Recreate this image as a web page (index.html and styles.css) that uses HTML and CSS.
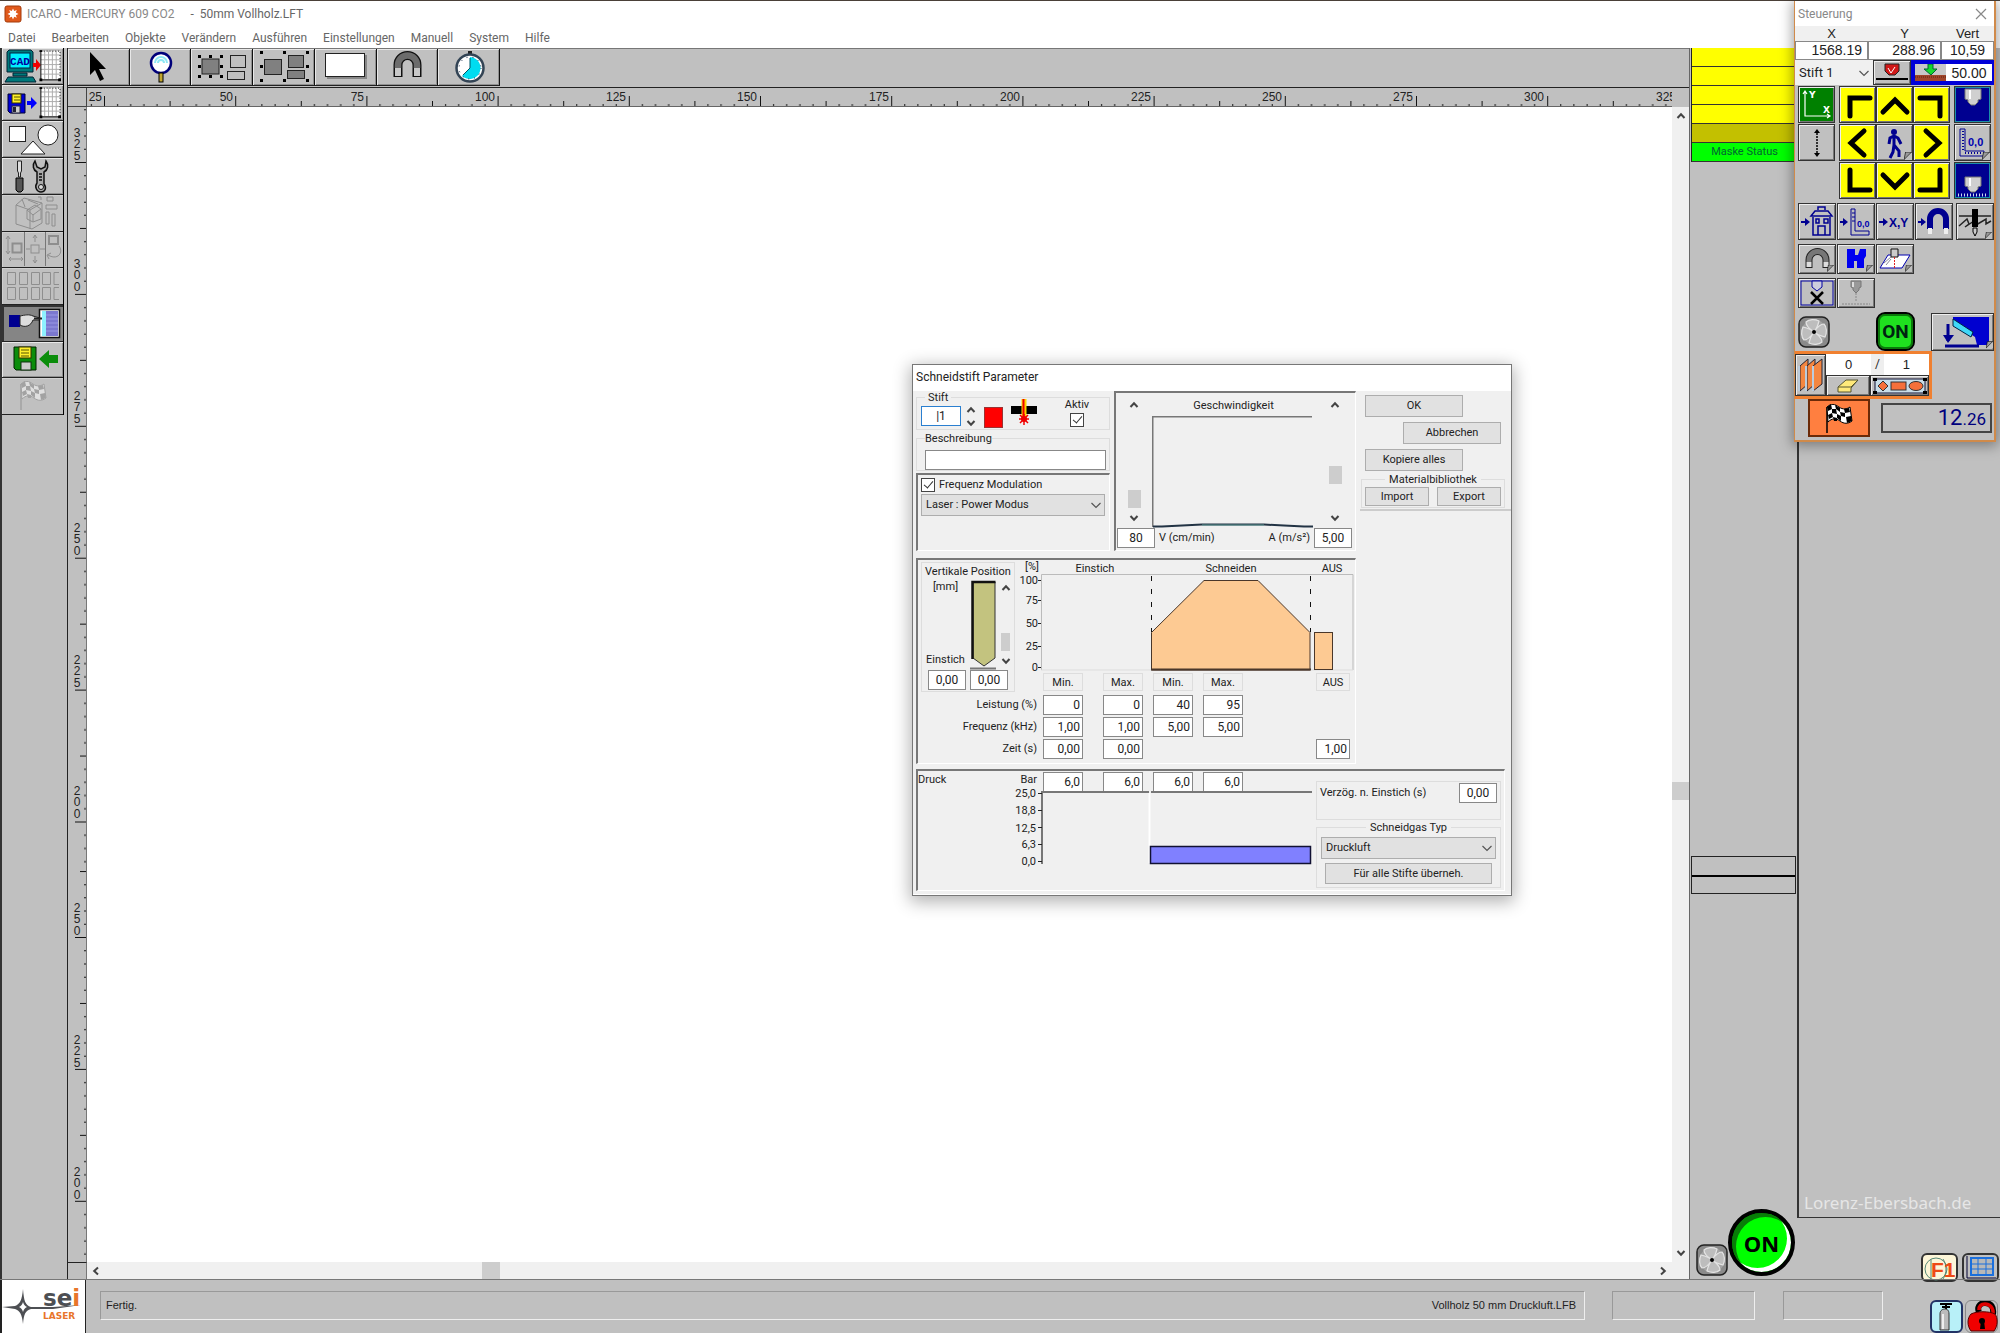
FILE: index.html
```
<!DOCTYPE html>
<html lang="de">
	<head>
		<meta charset="UTF-8">
		<meta name="viewport" content="width=device-width, initial-scale=1.0">
		<title>ICARO - MERCURY 609 CO2</title>
		<link rel="stylesheet" href="styles.css">
	</head>

	<body>
		<!-- Shared symbols -->
		<svg class="defs" width="0" height="0" aria-hidden="true">
			<symbol id="up" viewBox="0 0 10 10"><path d="M1.500 7 5 3.200 8.500 7" fill="none" stroke="#444" stroke-width="2"/></symbol>
			<symbol id="down" viewBox="0 0 10 10"><path d="M1.500 3 5 6.800 8.500 3" fill="none" stroke="#444" stroke-width="2"/></symbol>
			<symbol id="left" viewBox="0 0 10 10"><path d="M7 1.500 3.200 5 7 8.500" fill="none" stroke="#444" stroke-width="2"/></symbol>
			<symbol id="right" viewBox="0 0 10 10"><path d="M3 1.500 6.800 5 3 8.500" fill="none" stroke="#444" stroke-width="2"/></symbol>
			<symbol id="drop" viewBox="0 0 10 10"><path d="M0.500 3 5 7.500 9.500 3" fill="none" stroke="#555" stroke-width="1.200"/></symbol>
			<symbol id="fold" viewBox="0 0 10 10"><path d="M0 10 10 0V10Z" fill="#c0c0c0"/><path d="M0 9.500 9.500 0H2L0 9.500Z" fill="#999" stroke="#000" stroke-width=".8"/></symbol>
			<symbol id="fan" viewBox="0 0 32 32">
				<rect x="1" y="1" width="30" height="30" rx="7" fill="#8a8a8a" stroke="#222" stroke-width="1.500"/>
				<circle cx="16" cy="16" r="12.500" fill="#a4a4a4"/>
				<g fill="#bdbdbd" stroke="#e4e4e4" stroke-width="1.200">
					<path d="M16 16C13 14 8 10 8 6c3-3 9-3 13-1-1 4-2 8-5 11Z"/>
					<path d="M16 16c2-3 6-8 10-8 3 3 3 9 1 13-4-1-8-2-11-5Z"/>
					<path d="M16 16c3 2 8 6 8 10-3 3-9 3-13 1 1-4 2-8 5-11Z"/>
					<path d="M16 16c-2 3-6 8-10 8-3-3-3-9-1-13 4 1 8 2 11 5Z"/>
				</g>
				<circle cx="16" cy="16" r="2" fill="#000"/>
			</symbol>
			<symbol id="sheet" viewBox="0 0 24 33">
				<rect x="3" y="1" width="20" height="29" fill="#fff"/>
				<path d="M7 1v29M11 1v29M15 1v29M19 1v29M3 5h20M3 10h20M3 15h20M3 20h20M3 25h20" stroke="#aaa"/>
				<path d="M3 0v31h20" fill="none" stroke="#000"/>
				<path d="M3 1h20v29" fill="none" stroke="#000" stroke-dasharray="1 2"/>
				<path d="M1.500 29.500h3v3h-3zM21 29.500h3v3h-3zM1.500 0h3v2h-3z"/>
			</symbol>
			<symbol id="flag" viewBox="0 0 28 30">
				<path d="M2 3v26" stroke="currentColor" stroke-width="1.500"/>
				<path d="M2 3c4-4 8-3 12 0s8 2 11 0l2 14c-4 3-8 3-12 0s-8-3-12 1Z" fill="#fff" stroke="currentColor"/>
				<path d="M2 3 6 0l1 5-4 2zM10 1l5 3v4l-4-3zM19 5l5-1 1 4-5 1zM7 5l4 0 1 5-5-1zM15 8l5 1v4l-4-1zM3 11l4-2 1 4-4 2zM12 10l4 2 0 5-4-3zM21 13l5-1 1 5-5 2zM8 13l4 1 0 3-3 0z" fill="currentColor"/>
			</symbol>
		</svg>

		<!-- Title and menu -->
		<header class="titlebar">
			<svg width="18" height="18" viewBox="0 0 18 18"><rect x="1" y="1" width="16" height="16" rx="2" fill="#e0591b" stroke="#a43a0a"/><path d="M9 3.500l1.200 2.500 2.600-1-1 2.600L14.500 9l-2.700 1.200 1 2.600-2.600-1L9 14.500l-1.200-2.700-2.600 1 1-2.600L3.500 9l2.700-1.400-1-2.600 2.600 1Z" fill="#fff"/></svg>
			<span class="app-name">ICARO - MERCURY 609 CO2</span>
			<span class="file-name">-&nbsp; 50mm Vollholz.LFT</span>
		</header>
		<nav class="menubar">
			<button>Datei</button>
			<button>Bearbeiten</button>
			<button>Objekte</button>
			<button>Verändern</button>
			<button>Ausführen</button>
			<button>Einstellungen</button>
			<button>Manuell</button>
			<button>System</button>
			<button>Hilfe</button>
		</nav>

		<main>
			<!-- Left tool strip -->
			<aside class="left-tools">
				<div class="tool-stack">
					<button class="tool" aria-label="CAD Import"><svg width="58" height="34" viewBox="0 0 58 34">
						<path d="M5 1h22l2 2v20H3V3Z" fill="#00797b" stroke="#023"/><rect x="6" y="4" width="20" height="15" fill="#00f0ff" stroke="#024"/>
						<text x="16" y="15.500" text-anchor="middle" class="cad">CAD</text>
						<path d="M9 24h14v3H9zM4 28h25l3 5H1z" fill="#00797b" stroke="#023"/>
						<path d="M29 14h3v-4l5 6-5 6v-4h-3z" fill="#f00000"/><use href="#sheet" x="34" y="1" width="23" height="32"/></svg></button>
					<button class="tool" aria-label="Datei laden"><svg width="58" height="34" viewBox="0 0 58 34">
						<path d="M4 8h17v19H6l-2-2Z" fill="#0000d8" stroke="#003"/><rect x="8" y="8" width="9" height="9" fill="#ffee2b" stroke="#330"/><path d="M10 11h6M10 14h6" stroke="#550"/><rect x="8" y="20" width="8" height="7" fill="#ccc" stroke="#224"/><rect x="9" y="21" width="3" height="5" fill="#223"/>
						<path d="M23 15h4v-4l6 6-6 6v-4h-4z" fill="#0000ff"/><use href="#sheet" x="34" y="1" width="23" height="32"/></svg></button>
					<button class="tool" aria-label="Formen"><svg width="58" height="34" viewBox="0 0 58 34">
						<g fill="#fff" stroke="#222"><rect x="5.500" y="4.500" width="16" height="15"/><circle cx="44" cy="13" r="10"/><path d="M17 32 29 19l12 13Z"/></g></svg></button>
					<button class="tool" aria-label="Werkzeuge"><svg width="58" height="34" viewBox="0 0 58 34">
						<path d="M13.500 2h4v10l-1 2v4h-2v-4l-1-2z" fill="#ddd" stroke="#222"/><path d="M12 19h7v12l-2 2h-3l-2-2z" fill="#555" stroke="#000"/>
						<path d="M31 2c-3 4-2 9 2 11v11c-3 4 0 9 4 9s6-4 3-8V13c4-2 5-7 2-11l-1 6-4 2-4-2z" fill="#aaa" stroke="#111" stroke-width="1.500"/><circle cx="37" cy="28" r="2.500" fill="#ddd" stroke="#111"/><path d="M36.500 14v8" stroke="#333" stroke-width="3" stroke-dasharray="2 1"/></svg></button>
					<button class="tool" aria-label="Volumen" disabled><svg width="58" height="34" viewBox="0 0 58 34">
						<g fill="none" stroke="#8e8e8e"><path d="M12 9 20 2l18 5v20l-10 6-16-5ZM12 9l14 5 12-7M26 14v19M18 3l3 8M24 4l10 4M23 14l8-5 6 4-8 6zM23 14v9l6 3v-8M37 13v10l-8 3M43 1h6v4h-6zM34 1h3v3M42 9h11v4H42zM42 16h3v12h-3zM48 18h3v12h-3z"/></g></svg></button>
					<button class="tool" aria-label="Skalieren, Verschieben, Drehen" disabled><svg width="58" height="34" viewBox="0 0 58 34">
						<g fill="none" stroke="#8e8e8e"><path d="M20.500 0v34M41.500 0v34" stroke="#777"/><path d="M4 5v16M2 7l2-3 2 3M2 19l2 3 2-3M5 27h14M7 25l-2 2 2 2M17 25l2 2-2 2"/><rect x="8.500" y="11.500" width="9" height="9" stroke-width="2"/><rect x="27" y="13" width="8" height="8"/><path d="M31 3v7M31 24v7M22 17h4M36 17h5M29 6l2-3 2 3M29 28l2 3 2-3"/><rect x="45" y="4" width="9" height="8" stroke-width="2"/><path d="M55 14c5 6-1 15-11 9M47 21l-4 2 2 4"/></g></svg></button>
					<button class="tool" aria-label="Verschachteln" disabled><svg width="58" height="34" viewBox="0 0 58 34">
						<g fill="none" stroke="#8e8e8e"><path d="M3.500 3.500h8v12h-8zM15.500 3.500h8v12h-8zM27.500 3.500h8v12h-8zM38.500 3.500h8v12h-8zM3.500 18.500h8v12h-8zM15.500 18.500h8v12h-8zM27.500 18.500h8v12h-8zM38.500 18.500h8v12h-8zM55 3.500h-5v12h5M55 18.500h-5v12h5"/></g></svg></button>
					<button class="tool pressed" aria-label="Maschine"><svg width="58" height="34" viewBox="0 0 58 34">
						<rect x="5" y="9" width="11" height="12" fill="#000090"/><path d="M16 10c5-1 9-2 13 0l7 2v2h-7c-2 6-8 8-13 5Z" fill="#ddd" stroke="#222"/><rect x="35.500" y="3.500" width="20" height="28" fill="#fff" stroke="#111" stroke-width="1.500"/><rect x="38" y="5" width="4" height="25" fill="#8ef1ff"/><rect x="42" y="5" width="12" height="25" fill="#7b78cf"/><path d="M42 9h12M42 13h12M42 17h12M42 21h12M42 25h12" stroke="#9a98e4"/><path d="M30 12.500h8" stroke="#222" stroke-width="2"/></svg></button>
					<button class="tool" aria-label="Datei speichern"><svg width="58" height="34" viewBox="0 0 58 34">
						<path d="M10 5h22v23H12l-2-2Z" fill="#0b8d0b" stroke="#020"/><rect x="15" y="5" width="12" height="11" fill="#ffee2b" stroke="#330"/><path d="M17 8h8M17 11h8M17 14h8" stroke="#550"/><rect x="17" y="20" width="10" height="8" fill="#ccc" stroke="#131"/>
						<path d="M54 13v8h-9v5l-10-9 10-9v5z" fill="#0b8d0b"/></svg></button>
					<button class="tool faded" aria-label="Start" disabled><svg width="28" height="30"><use href="#flag" width="28" height="30"/></svg></button>
				</div>
			</aside>

			<section class="workspace">
				<!-- Top toolbar -->
				<div class="toolbar">
					<div class="tool-row">
						<button class="tool" aria-label="Auswahl"><svg width="58" height="34" viewBox="0 0 58 34"><path d="M21 2v23l5-5 5 11 4-2-5-10h7Z"/></svg></button>
						<button class="tool" aria-label="Zoom"><svg width="58" height="34" viewBox="0 0 58 34"><circle cx="30" cy="13" r="10" fill="#fff" stroke="#00007a" stroke-width="2.500"/><path d="M24 13a6 6 0 0 1 12 0M27 13a3 3 0 0 1 6 0" fill="none" stroke="#8fe8f4" stroke-width="2"/><rect x="28" y="23" width="4" height="9" fill="#c2a62c" stroke="#000"/></svg></button>
						<button class="tool" aria-label="Gruppieren"><svg width="58" height="34" viewBox="0 0 58 34"><rect x="9" y="9" width="17" height="15" fill="#808080" stroke="#222"/><path d="M5 5h3v3H5zM16 5h3v3h-3zM27 5h3v3h-3zM5 15h3v3H5zM27 15h3v3h-3zM5 25h3v3H5zM16 25h3v3h-3zM27 25h3v3h-3z"/><g fill="none" stroke="#222"><rect x="37.500" y="5.500" width="15" height="12"/><rect x="34.500" y="21.500" width="17" height="8"/></g></svg></button>
						<button class="tool" aria-label="Gruppe auflösen"><svg width="58" height="34" viewBox="0 0 58 34"><g fill="#808080" stroke="#222"><rect x="9.500" y="9.500" width="17" height="15"/><rect x="33.500" y="5.500" width="15" height="12"/><rect x="32.500" y="20.500" width="17" height="8"/></g><path d="M5 1h3v3H5zM28 1h3v3h-3zM51 1h3v3h-3zM5 15h3v3H5zM51 15h3v3h-3zM5 29h3v3H5zM28 29h3v3h-3zM51 29h3v3h-3z"/></svg></button>
						<button class="tool" aria-label="Rechteck"><svg width="58" height="34" viewBox="0 0 58 34"><path d="M11 5h40v24H11z" fill="#888"/><rect x="9.500" y="3.500" width="39" height="23" fill="#fff" stroke="#222"/></svg></button>
						<button class="tool" aria-label="Magnet"><svg width="58" height="34" viewBox="0 0 58 34"><path d="M20 27V15a9.500 9.500 0 0 1 19 0v12" fill="none" stroke="#111" stroke-width="9"/><path d="M20 18v-3a9.500 9.500 0 0 1 19 0v3" fill="none" stroke="#6c6c6c" stroke-width="6.500"/><path d="M20 26v-8M39 26v-8" stroke="#c8c8c8" stroke-width="6"/></svg></button>
						<button class="tool" aria-label="Zeit"><svg width="58" height="34" viewBox="0 0 58 34"><path d="M30 5V1" stroke="#222" stroke-width="4"/><circle cx="30" cy="18" r="13.500" fill="#fff" stroke="#345" stroke-width="2.500"/><path d="M30 18V7a11 11 0 1 1-8 19Z" fill="#00dcf0"/><circle cx="30" cy="18" r="11" fill="none" stroke="#124" stroke-dasharray="1 5"/><path d="M30 8v10l-7 7" fill="none" stroke="#056"/></svg></button>
					</div>
				</div>

				<!-- Drawing area with rulers -->
				<div class="work">
					<div class="corner"></div>
					<svg class="ruler-h" height="19">
						<defs><pattern id="th" x="17" width="131.200" height="19" patternUnits="userSpaceOnUse"><path d="M.5 8v11M13.600 16v3M26.700 16v3M39.900 16v3M53 16v3M66.100 13v6M79.200 16v3M92.300 16v3M105.500 16v3M118.600 16v3" stroke="#111"/></pattern></defs>
						<rect width="100%" height="19" fill="url(#th)"/>
						<g text-anchor="end">
							<text x="15" y="13">25</text><text x="146" y="13">50</text><text x="277" y="13">75</text><text x="408" y="13">100</text><text x="539" y="13">125</text><text x="670" y="13">150</text><text x="802" y="13">175</text><text x="933" y="13">200</text><text x="1064" y="13">225</text><text x="1195" y="13">250</text><text x="1326" y="13">275</text><text x="1457" y="13">300</text><text x="1589" y="13">325</text>
						</g>
					</svg>
					<div class="vbar">
						<svg class="chev"><use href="#up"/></svg>
						<div class="thumb"></div>
						<svg class="chev"><use href="#down"/></svg>
					</div>
					<svg class="ruler-v" width="19">
						<defs>
							<pattern id="tv" y="55" width="19" height="131.900" patternUnits="userSpaceOnUse"><path d="M7 .5h12M16 13.700h3M16 26.900h3M16 40.100h3M16 53.300h3M12 66.500h7M16 79.600h3M16 92.800h3M16 106h3M16 119.200h3" stroke="#111"/></pattern>
							<pattern id="tv2" y="830" width="19" height="131.900" patternUnits="userSpaceOnUse"><path d="M7 .5h12M16 13.700h3M16 26.900h3M16 40.100h3M16 53.300h3M12 66.500h7M16 79.600h3M16 92.800h3M16 106h3M16 119.200h3" stroke="#111"/></pattern>
						</defs>
						<rect width="19" height="760" fill="url(#tv)"/>
						<rect y="760" width="19" height="400" fill="url(#tv2)"/>
						<g text-anchor="middle">
							<text y="30"><tspan x="9">3</tspan><tspan x="9" dy="11">2</tspan><tspan x="9" dy="12">5</tspan></text>
							<text y="161"><tspan x="9">3</tspan><tspan x="9" dy="11">0</tspan><tspan x="9" dy="12">0</tspan></text>
							<text y="293"><tspan x="9">2</tspan><tspan x="9" dy="11">7</tspan><tspan x="9" dy="12">5</tspan></text>
							<text y="425"><tspan x="9">2</tspan><tspan x="9" dy="11">5</tspan><tspan x="9" dy="12">0</tspan></text>
							<text y="557"><tspan x="9">2</tspan><tspan x="9" dy="11">2</tspan><tspan x="9" dy="12">5</tspan></text>
							<text y="688"><tspan x="9">2</tspan><tspan x="9" dy="11">0</tspan><tspan x="9" dy="12">0</tspan></text>
							<text y="805"><tspan x="9">2</tspan><tspan x="9" dy="11">5</tspan><tspan x="9" dy="12">0</tspan></text>
							<text y="937"><tspan x="9">2</tspan><tspan x="9" dy="11">2</tspan><tspan x="9" dy="12">5</tspan></text>
							<text y="1069"><tspan x="9">2</tspan><tspan x="9" dy="11">0</tspan><tspan x="9" dy="12">0</tspan></text>
						</g>
					</svg>
					<div class="canvas"></div>
					<div class="corner-bottom"></div>
					<div class="hbar">
						<svg class="chev"><use href="#left"/></svg>
						<div class="thumb"></div>
						<svg class="chev"><use href="#right"/></svg>
					</div>
				</div>
			</section>

			<!-- Mask status column -->
			<section class="mask-col">
				<div class="mask-list">
					<div class="mask"></div>
					<div class="mask"></div>
					<div class="mask"></div>
					<div class="mask"></div>
					<div class="mask dim"></div>
					<div class="mask green">Maske Status</div>
				</div>
				<div class="slots"><div></div><div></div></div>
				<div class="mask-foot">
					<svg width="32" height="32"><use href="#fan" width="32" height="32"/></svg>
					<button class="on-round">ON</button>
				</div>
			</section>

			<section class="side">
				<div class="side-panel"><a class="credit" href="#">Lorenz-Ebersbach.de</a></div>
				<div class="side-icons">
					<button class="mini cream" aria-label="Hilfe F1"><svg width="34" height="26" viewBox="0 0 34 26"><circle cx="13" cy="14" r="11" fill="none" stroke="#587"/><path d="M8 4v20M20 4c4 6 4 14 0 20" fill="none" stroke="#587"/><text x="8" y="22" class="f1">F1</text></svg></button>
					<button class="mini" aria-label="Raster"><svg width="34" height="26" viewBox="0 0 34 26"><rect x="7" y="3" width="22" height="17" fill="#b8b8b8" stroke="#1b6fdc" stroke-width="2"/><path d="M14 3v17M22 3v17M7 9h22M7 14h22" stroke="#1b6fdc"/><path d="M3 1v22h29" fill="none" stroke="#003"/></svg></button>
				</div>
			</section>
		</main>

		<!-- Status bar -->
		<footer class="statusbar">
			<div class="logo">
				<svg width="83" height="53" viewBox="0 0 83 53">
					<path d="M21 9c1 12 2 16 8 18h22l28-2-28 4H29c-6 2-7 5-8 15-1-10-3-13-8-15L0 27l13-1c5-2 7-6 8-17Z" fill="#4d4f53"/>
					<path d="M21 22c1 3 2 4 4 5-2 1-3 2-4 5-1-3-2-4-4-5 2-1 3-2 4-5Z" fill="#fff"/>
					<text x="41" y="26" class="sei">se<tspan class="orange">i</tspan></text>
					<text x="41" y="39" class="laser">LASER</text>
				</svg>
			</div>
			<div class="field main-field"><span>Fertig.</span><span>Vollholz 50 mm Druckluft.LFB</span></div>
			<div class="field mid-field"></div>
			<div class="field small-field"></div>
			<div class="status-icons">
				<button class="mini ice" aria-label="Gas"><svg width="28" height="30" viewBox="0 0 28 30"><path d="M7 2h12M13 2v6M9 5h8" stroke="#000" stroke-width="2"/><path d="M7 28V12c0-4 3-5 5-5s4 1 4 5v16Z" fill="#bbb" stroke="#333"/><path d="M10 12v15" stroke="#eee" stroke-width="2"/></svg></button>
				<button class="mini plain" aria-label="Schloss offen"><svg width="32" height="32" viewBox="0 0 32 32"><path d="M13 11c-2-4 0-9 6-9s9 4 8 11" fill="none" stroke="#000" stroke-width="6"/><path d="M13 9c0-4 2-6 6-6s9 3 8 11" fill="none" stroke="#e00000" stroke-width="3.500"/><path d="M5 13c6-3 18-3 24 0 3 4 3 12-1 17H5C1 25 1 17 5 13Z" fill="#f00000" stroke="#500"/><circle cx="16" cy="20" r="3"/><path d="M15 20h3l1 8h-5z"/></svg></button>
			</div>
		</footer>

		<!-- Pen parameter dialog -->
		<form class="dialog">
			<h1>Schneidstift Parameter</h1>
			<div class="dialog-body">
				<div class="top-row">
					<div class="pen-col">
						<div class="group pen-group">
							<div class="pen-number">
								<label for="stift">Stift</label>
								<input id="stift" type="text" value="|1">
							</div>
							<div class="spin"><svg class="chev"><use href="#up"/></svg><svg class="chev"><use href="#down"/></svg></div>
							<div class="swatch"></div>
							<svg class="beam" width="26" height="26" viewBox="0 0 26 26"><path d="M0 7h26v8H0z"/><path d="M13 0v20" stroke="#ffd800" stroke-width="5"/><path d="M12.500 0v20" stroke="#f00000" stroke-width="2"/><path d="M8 20h10M13 15v11M9 16l8 8M17 16l-8 8" stroke="#f00000" stroke-width="1.500"/><circle cx="13" cy="20" r="3" fill="#f00000"/></svg>
							<div class="active-box">
								<label for="aktiv">Aktiv</label>
								<input id="aktiv" type="checkbox" checked>
							</div>
						</div>
						<div class="group desc-group">
							<label for="desc">Beschreibung</label>
							<input id="desc" type="text">
						</div>
						<div class="sunken freq-box">
							<div class="check-line"><input id="fm" type="checkbox" checked><label for="fm">Frequenz Modulation</label></div>
							<span class="select-wrap"><select aria-label="Modus"><option>Laser : Power Modus</option></select><svg><use href="#drop"/></svg></span>
						</div>
					</div>

					<div class="sunken speed-box">
						<div class="vscroll low"><svg class="chev"><use href="#up"/></svg><div class="thumb"></div><svg class="chev"><use href="#down"/></svg></div>
						<div class="speed-mid">
							<h2>Geschwindigkeit</h2>
							<svg width="163" height="112" viewBox="0 0 163 112"><path d="M.5 111V.5H160" fill="none" stroke="#777" stroke-width="2"/><path d="M1 110.500h9l20-1 20-1h62l20 1 20 1h9" fill="none" stroke="#234" stroke-width="2"/><path d="M50 109h62" stroke="#5c9a93"/></svg>
						</div>
						<div class="vscroll mid"><svg class="chev"><use href="#up"/></svg><div class="thumb"></div><svg class="chev"><use href="#down"/></svg></div>
						<div class="speed-foot">
							<input id="v" class="center" type="text" value="80"><label for="v">V (cm/min)</label>
							<label for="a" class="push">A (m/s²)</label><input id="a" class="center" type="text" value="5,00">
						</div>
					</div>

					<div class="actions">
						<button type="button" class="wide">OK</button>
						<button type="button" class="wide to-right">Abbrechen</button>
						<button type="button" class="wide">Kopiere alles</button>
						<div class="group library">
							<h2>Materialbibliothek</h2>
							<div><button type="button">Import</button><button type="button">Export</button></div>
						</div>
					</div>
				</div>

				<div class="sunken power-box">
					<div class="vert-group">
						<h2>Vertikale Position</h2>
						<div class="vert-mid">
							<div class="vert-labels"><span>[mm]</span><label for="ve">Einstich</label></div>
							<svg width="28" height="91" viewBox="0 0 28 91"><path d="M4 3h22v76l-11 8-11-8Z" fill="#c3c37f" stroke="#333"/><path d="M3.500 80V3h23" fill="none" stroke="#111" stroke-width="2.500"/><path d="M1 89.500h26" stroke="#777" stroke-width="2"/></svg>
							<div class="vscroll slim"><svg class="chev"><use href="#up"/></svg><div class="thumb"></div><svg class="chev"><use href="#down"/></svg></div>
						</div>
						<div class="vert-inputs"><input id="ve" class="center" type="text" value="0,00"><input class="center" type="text" value="0,00" aria-label="Vertikale Position"></div>
					</div>
					<svg class="power-chart" width="339" height="111" viewBox="0 2 339 111">
						<path d="M26.500 112V16.500H338V112" fill="none" stroke="#bbb"/>
						<path d="M26 112H338" stroke="#ddd"/>
						<g text-anchor="end"><text x="24" y="12">[%]</text><text x="23" y="26">100</text><text x="23" y="46">75</text><text x="23" y="69">50</text><text x="23" y="92">25</text><text x="23" y="113">0</text></g>
						<path d="M23 22.500h3M23 42.500h3M23 65.500h3M23 88.500h3M23 109.500h3" stroke="#222"/>
						<g text-anchor="middle"><text x="80" y="14">Einstich</text><text x="216" y="14">Schneiden</text><text x="317" y="14">AUS</text></g>
						<path d="M136.500 18v56M295.500 18v56" stroke="#111" stroke-dasharray="5 8"/>
						<path d="M136.500 112V74.500L189 22.500h54l52 52V112Z" fill="#fdca93" stroke="#4a372a"/>
						<rect x="299.500" y="74.500" width="18" height="37" fill="#fdca93" stroke="#4a372a"/>
						<path d="M136 111.500h160" stroke="#4a372a" stroke-width="2"/>
					</svg>
					<span class="cell head c1">Min.</span><span class="cell head">Max.</span><span class="cell head">Min.</span><span class="cell head">Max.</span><span class="cell head aus">AUS</span>
					<label class="row-name" for="l1">Leistung (%)</label>
					<input id="l1" class="cell" type="text" value="0"><input class="cell" type="text" value="0" aria-label="Leistung Einstich Max."><input class="cell" type="text" value="40" aria-label="Leistung Schneiden Min."><input class="cell" type="text" value="95" aria-label="Leistung Schneiden Max.">
					<label class="row-name" for="f1">Frequenz (kHz)</label>
					<input id="f1" class="cell" type="text" value="1,00"><input class="cell" type="text" value="1,00" aria-label="Frequenz Einstich Max."><input class="cell" type="text" value="5,00" aria-label="Frequenz Schneiden Min."><input class="cell" type="text" value="5,00" aria-label="Frequenz Schneiden Max.">
					<label class="row-name" for="z1">Zeit (s)</label>
					<input id="z1" class="cell" type="text" value="0,00"><input class="cell" type="text" value="0,00" aria-label="Zeit Einstich Max."><input class="cell aus" type="text" value="1,00" aria-label="Zeit AUS">
				</div>

				<div class="sunken gas-box">
					<div class="gas-left">
						<span class="gas-title">Druck</span>
						<label class="bar-name" for="b1">Bar</label>
						<input id="b1" class="cell" type="text" value="6,0"><input class="cell" type="text" value="6,0" aria-label="Druck Einstich Max."><input class="cell" type="text" value="6,0" aria-label="Druck Schneiden Min."><input class="cell" type="text" value="6,0" aria-label="Druck Schneiden Max.">
						<svg class="gas-chart" width="396" height="78" viewBox="0 0 396 78">
							<g text-anchor="end"><text x="118" y="5">25,0</text><text x="118" y="22">18,8</text><text x="118" y="40">12,5</text><text x="118" y="56">6,3</text><text x="118" y="73">0,0</text></g>
							<path d="M124 72V0H231M233 0H394" fill="none" stroke="#777" stroke-width="2"/>
							<path d="M120 1.500h4M120 18.500h4M120 35.500h4M120 52.500h4M120 69.500h4" stroke="#222"/>
							<path d="M231.500 1v70" stroke="#fff" stroke-width="2"/>
							<rect x="232.500" y="54.500" width="160" height="17" fill="#8080ff" stroke="#113" stroke-width="1.500"/>
						</svg>
					</div>
					<div class="gas-right">
						<div class="plain-group"><label for="delay">Verzög. n. Einstich (s)</label><input id="delay" class="center" type="text" value="0,00"></div>
						<div class="group gas-group">
							<h2>Schneidgas Typ</h2>
							<span class="select-wrap"><select aria-label="Schneidgas Typ"><option>Druckluft</option></select><svg><use href="#drop"/></svg></span>
							<button type="button">Für alle Stifte überneh.</button>
						</div>
					</div>
				</div>
			</div>
		</form>

		<!-- Control window -->
		<section class="control">
			<div class="control-title">
				<span>Steuerung</span>
				<button aria-label="Schließen"><svg width="12" height="12" viewBox="0 0 12 12"><path d="M1 1l10 10M11 1 1 11" stroke="#888" stroke-width="1.200"/></svg></button>
			</div>
			<div class="coords">
				<span>X</span><span>Y</span><span>Vert</span>
				<output>1568.19</output><output>288.96</output><output>10,59</output>
			</div>
			<div class="pen-line">
				<span class="select-wrap flat"><select aria-label="Stift"><option>Stift 1</option></select><svg><use href="#drop"/></svg></span>
				<button class="key" aria-label="Laser"><svg width="36" height="22" viewBox="0 0 36 22"><path d="M11 2h14v7l-4 4h-6l-4-4z" fill="#d01818" stroke="#222"/><path d="M14 6l3 5 4-6" stroke="#fff" fill="none"/><path d="M2 17h32" stroke="#000" stroke-width="2"/></svg></button>
				<div class="height-box"><svg width="31" height="17" viewBox="0 0 31 17"><rect width="31" height="17" fill="#c8c8c8"/><path d="M13 0h5v5h4l-6 6-7-6h4z" fill="#16d82e" stroke="#063"/><rect y="11" width="31" height="6" fill="#a0452a"/><path d="M0 13h31" stroke="#5b2412" stroke-dasharray="1 1"/></svg><input type="text" value="50.00" aria-label="Höhe"></div>
			</div>
			<div class="pad">
				<button class="key green" aria-label="Achsen"><svg width="34" height="34" viewBox="0 0 34 34"><path d="M5 4v24h24M3 6l2-3 2 3M27 26l3 2-3 2" fill="none" stroke="#fff" stroke-width="1.200"/><text x="9" y="10" class="axis">Y</text><text x="23" y="25" class="axis">X</text></svg></button>
				<button class="key yellow" aria-label="Oben links"><svg width="34" height="34" viewBox="0 0 34 34"><path d="M9 28V10h20" class="arm"/></svg></button>
				<button class="key yellow" aria-label="Oben"><svg width="34" height="34" viewBox="0 0 34 34"><path d="M5 24 17 12l12 12" class="arm"/></svg></button>
				<button class="key yellow" aria-label="Oben rechts"><svg width="34" height="34" viewBox="0 0 34 34"><path d="M5 10h20v18" class="arm"/></svg></button>
				<button class="key navy" aria-label="Kopf hoch"><svg width="34" height="34" viewBox="0 0 34 34"><path d="M9 1h16v10l-3 1v2l-3 3h-4l-3-3v-2l-3-1z" fill="#d0d0d0" stroke="#777"/><path d="M14 2v9" stroke="#fff" stroke-width="2"/></svg></button>

				<button class="key" aria-label="Höhe"><svg width="34" height="34" viewBox="0 0 34 34"><path d="M17 7v20" stroke="#000" stroke-width="1.500" stroke-dasharray="2 1"/><path d="M14 7l3-4 3 4zM14 27l3 4 3-4z"/></svg></button>
				<button class="key yellow" aria-label="Links"><svg width="34" height="34" viewBox="0 0 34 34"><path d="M23 5 10 17l13 12" class="arm"/></svg></button>
				<button class="key" aria-label="Schritt"><svg width="34" height="34" viewBox="0 0 34 34"><circle cx="16" cy="6" r="3" fill="#000090"/><path d="M16 9v11M11 18l1-6 4-2 4 2 3 6M16 19l-1 7-3 6M16 19l5 6v6" fill="none" stroke="#000090" stroke-width="3"/><use href="#fold" x="26" y="26" width="8" height="8"/></svg></button>
				<button class="key yellow" aria-label="Rechts"><svg width="34" height="34" viewBox="0 0 34 34"><path d="M11 5l13 12-13 12" class="arm"/></svg></button>
				<button class="key" aria-label="Nullpunkt"><svg width="34" height="34" viewBox="0 0 34 34"><path d="M4 3h5v22h19v5H4z" fill="none" stroke="#000090"/><path d="M7 5v20M9 27h18" stroke="#000090" stroke-dasharray="1 2" stroke-width="2"/><text x="12" y="20" class="zero">0,0</text><use href="#fold" x="26" y="26" width="8" height="8"/></svg></button>

				<span></span>
				<button class="key yellow" aria-label="Unten links"><svg width="34" height="34" viewBox="0 0 34 34"><path d="M9 6v20h20" class="arm"/></svg></button>
				<button class="key yellow" aria-label="Unten"><svg width="34" height="34" viewBox="0 0 34 34"><path d="M5 11l12 12 12-12" class="arm"/></svg></button>
				<button class="key yellow" aria-label="Unten rechts"><svg width="34" height="34" viewBox="0 0 34 34"><path d="M5 26h20V6" class="arm"/></svg></button>
				<button class="key navy" aria-label="Kopf runter"><svg width="34" height="34" viewBox="0 0 34 34"><path d="M9 13h16v9l-3 1v2l-3 3h-4l-3-3v-2l-3-1z" fill="#d0d0d0" stroke="#777"/><path d="M14 14v8" stroke="#fff" stroke-width="2"/><path d="M2 31h30" stroke="#cde" stroke-width="3" stroke-dasharray="1 2"/></svg></button>
			</div>
			<div class="key-row tall">
				<button class="key" aria-label="Home"><svg width="34" height="34" viewBox="0 0 34 34"><path d="M1 17h6" stroke="#000090" stroke-width="2"/><path d="M5 13l5 4-5 4z" fill="#000090"/><path d="M13 12v18h17V12M11 11l4-5h13l4 5zM18 5V2h7v3M18 30v-9h7v9M16 14h3v4h-3zM24 14h4v4h-4z" fill="none" stroke="#000090" stroke-width="1.500"/></svg></button>
				<button class="key" aria-label="Zum Nullpunkt"><svg width="34" height="34" viewBox="0 0 34 34"><path d="M1 17h6" stroke="#000090" stroke-width="2"/><path d="M4 13l5 4-5 4z" fill="#000090"/><path d="M12 4h4v22h14v4H12zM13 8h3M13 12h3M13 16h3" fill="none" stroke="#000090"/><text x="18" y="22" class="zero small">0,0</text></svg></button>
				<button class="key" aria-label="Zu X,Y"><svg width="34" height="34" viewBox="0 0 34 34"><path d="M1 17h5" stroke="#000090" stroke-width="2"/><path d="M5 13l5 4-5 4z" fill="#000090"/><text x="11" y="22" class="xy">X,Y</text></svg></button>
				<button class="key" aria-label="Zum Magnet"><svg width="34" height="34" viewBox="0 0 34 34"><path d="M1 17h5" stroke="#000090" stroke-width="2"/><path d="M4 13l5 4-5 4z" fill="#000090"/><path d="M13 24V14a7.500 7.500 0 0 1 16 0v10" fill="none" stroke="#000090" stroke-width="6"/><path d="M13 23v6M29 23v6" stroke="#eee" stroke-width="4"/></svg></button>
				<button class="key apart" aria-label="Stift"><svg width="34" height="34" viewBox="0 0 34 34"><path d="M1 11h32M1 21l8-7 2 5-4 3 12-8M18 20l10-6v5l5-3" fill="none" stroke="#222" stroke-width="1.500"/><path d="M14 4h6v18h-6z"/><path d="M15 23h4v4l-2 4-2-4z" fill="#ccc" stroke="#000"/><use href="#fold" x="27" y="27" width="7" height="7"/></svg></button>
			</div>
			<div class="key-row">
				<button class="key" aria-label="Magnet"><svg width="34" height="26" viewBox="0 0 34 26"><path d="M9 22v-8a8 8 0 0 1 17 0v8" fill="none" stroke="#222" stroke-width="7"/><path d="M9 16v-2a8 8 0 0 1 17 0v2" fill="none" stroke="#777" stroke-width="5"/><path d="M9 21v-5M26 21v-5" stroke="#ddd" stroke-width="5"/><use href="#fold" x="27" y="19" width="7" height="7"/></svg></button>
				<button class="key" aria-label="Halten"><svg width="34" height="26" viewBox="0 0 34 26"><path d="M8 3h8v6h3l2-6h6v7l-2 3v9h-7v-7h-3v7H8Z" fill="#0000f0"/><use href="#fold" x="27" y="19" width="7" height="7"/></svg></button>
				<button class="key" aria-label="Ebene"><svg width="34" height="26" viewBox="0 0 34 26"><path d="M10 9h22l-8 13H2Z" fill="#fff" stroke="#0000b0"/><path d="M13 3h7v8h-7z" fill="#ccc" stroke="#111"/><path d="M16.500 11v11" stroke="#e02020" stroke-dasharray="2 1"/><path d="M6 17l7-6M8 19l5-6" stroke="#889"/><use href="#fold" x="27" y="19" width="7" height="7"/></svg></button>
			</div>
			<div class="key-row">
				<button class="key" aria-label="Kopf aus"><svg width="34" height="26" viewBox="0 0 34 26"><rect x="1" y="1" width="32" height="24" fill="none" stroke="#0000a0"/><path d="M12 1h10v6l-5 4-5-4Z" fill="#ccd" stroke="#0000a0"/><path d="M11 12l12 12M23 12 11 24" stroke="#000" stroke-width="2.500"/></svg></button>
				<button class="key" aria-label="Kopf" disabled><svg width="34" height="26" viewBox="0 0 34 26"><path d="M12 1h10v6l-2 1v2l-3 3-3-3V8l-2-1Z" fill="#999" stroke="#777"/><path d="M14 2v5" stroke="#ddd" stroke-width="2"/><path d="M17 13v9M3 24h28" stroke="#888" stroke-dasharray="2 1"/></svg></button>
			</div>
			<div class="state-row">
				<svg width="32" height="32"><use href="#fan" width="32" height="32"/></svg>
				<button class="on-square">ON</button>
				<button class="key wide-key" aria-label="Laser senken"><svg width="60" height="34" viewBox="0 0 60 34"><path d="M20 2h36v28H44l-2-8-22-14Z" fill="#0000d0"/><path d="M20 4l20 13-2 5L20 11Z" fill="#40d8f8" stroke="#024"/><path d="M15 9v17M12 31h34" stroke="#000090" stroke-width="3"/><path d="M10 20h11l-6 8z" fill="#000090"/><use href="#fold" x="53" y="26" width="7" height="8"/></svg></button>
			</div>
			<div class="job-box">
				<button class="key tall-key" aria-label="Stapel"><svg width="28" height="38" viewBox="0 0 28 38"><g fill="#f48640" stroke="#223"><path d="M3 10l8-7v25l-8 7z"/><path d="M10 10l8-7v25l-8 7z"/><path d="M16 10l9-7v25l-9 7z"/></g><path d="M2 10v25M9 10v25M16 10v25" stroke="#bcd" stroke-width="2"/></svg></button>
				<div class="job-mid">
					<div class="job-count"><input type="text" value="0" aria-label="Stück"><span>/</span><input type="text" value="1" aria-label="Anzahl"></div>
					<div class="job-keys">
						<button class="key" aria-label="Löschen"><svg width="40" height="16" viewBox="0 0 40 16"><path d="M10 9l8-7h12l-7 8v4H10Z" fill="#ffe97a" stroke="#553"/><path d="M10 9h13l7-7" fill="none" stroke="#553"/></svg></button>
						<button class="key" aria-label="Formen"><svg width="54" height="16" viewBox="0 0 54 16"><rect x="2" y="1" width="50" height="14" fill="#c8dde8" stroke="#113"/><g fill="#f5703a" stroke="#333"><path d="M5 8l5-5 5 5-5 5z"/><rect x="18" y="4" width="15" height="8"/><ellipse cx="43" cy="8" rx="7" ry="4.500"/></g><path d="M0 0h4v3H0zM50 0h4v3h-4zM0 13h4v3H0zM50 13h4v3h-4z"/></svg></button>
					</div>
				</div>
			</div>
			<div class="start-row">
				<button class="start" aria-label="Start"><svg width="28" height="30"><use href="#flag" width="28" height="30"/></svg></button>
				<output class="timer">12<small>.26</small></output>
			</div>
		</section>
	</body>
</html>
```
FILE: styles.css
```
*
{
	box-sizing: border-box;
}

body
{
	margin: 0;
	height: 100vh;
	display: flex;
	flex-direction: column;
	background: #c0c0c0;
	color: #222;
	font-family: Roboto, "Liberation Sans", sans-serif;
	font-size: 12px;
	line-height: 14px;
	overflow: hidden;
}

button, input, select
{
	font: inherit;
	color: inherit;
	margin: 0;
	padding: 0;
	border-radius: 0;
}

svg
{
	display: block;
	flex: none;
}

.defs
{
	position: absolute;
}

h1, h2
{
	margin: 0;
	font-size: 12px;
	font-weight: normal;
	line-height: 14px;
}

/* Title and menu */

.titlebar
{
	display: flex;
	align-items: center;
	height: 27px;
	padding-left: 4px;
	background: #fff;
	border-top: 1px solid #4a4038;
	color: #888;
}

.app-name
{
	margin-left: 5px;
}

.file-name
{
	margin-left: 16px;
	color: #666;
}

.menubar
{
	display: flex;
	height: 21px;
	background: #fff;
}

.menubar button
{
	border: 0;
	background: none;
	padding: 0 8px;
	color: #666;
}

main
{
	flex: 1;
	display: flex;
	min-height: 0;
}

/* Tools */

.left-tools
{
	width: 67px;
	border-left: 2px solid #333;
}

.tool-stack
{
	display: flex;
	flex-direction: column;
	width: 62px;
	height: 367px;
	border-right: 1px solid #000;
}

.tool
{
	flex: 1;
	display: flex;
	align-items: center;
	justify-content: center;
	min-width: 0;
	min-height: 0;
	overflow: hidden;
	background: #c0c0c0;
	border: 0;
	border-bottom: 1px solid #222;
	box-shadow: inset 1px 1px #e8e8e8, inset -1px -1px #909090;
	color: #000;
}

.tool:disabled
{
	box-shadow: inset 1px 1px #d0d0d0;
}

.tool.pressed
{
	background: #858585;
	box-shadow: inset 2px 2px #333;
}

.tool.faded
{
	color: #858585;
}

.tool.faded svg
{
	opacity: 0.5;
}

.cad
{
	font: bold 11px "Liberation Mono", monospace;
	fill: #0000a0;
}

.workspace
{
	flex: 1;
	min-width: 0;
	display: flex;
	flex-direction: column;
	border-left: 1px solid #222;
	border-right: 1px solid #666;
}

.toolbar
{
	height: 40px;
	border-top: 1px solid #777;
	border-bottom: 1px solid #222;
}

.tool-row
{
	display: flex;
	width: 432px;
	height: 37px;
}

.tool-row .tool
{
	border-right: 1px solid #111;
}

/* Rulers, canvas and scroll bars */

.work
{
	flex: 1;
	min-height: 0;
	display: grid;
	grid-template-columns: 19px 1fr 17px;
	grid-template-rows: 19px 1fr 17px;
}

.work text
{
	font: 12px "Liberation Sans", sans-serif;
	fill: #222;
}

.corner
{
	border-right: 1px solid #444;
	border-bottom: 1px solid #444;
}

.corner-bottom
{
	border-top: 1px solid #222;
	border-right: 1px solid #777;
}

.ruler-h
{
	width: 100%;
	border-bottom: 1px solid #666;
}

.ruler-v
{
	height: 100%;
	border-right: 1px solid #777;
}

.canvas
{
	background: #fff;
}

.vbar
{
	grid-row: 1 / 4;
	grid-column: 3;
	display: flex;
	flex-direction: column;
	align-items: center;
	margin-top: 19px;
	padding: 4px 0 21px;
	background: #f0f0f0;
}

.vbar .thumb
{
	width: 17px;
	height: 18px;
	margin: 661px 0 auto;
	background: #cdcdcd;
}

.hbar
{
	display: flex;
	align-items: center;
	padding: 0 4px;
	background: #f0f0f0;
}

.hbar .thumb
{
	width: 18px;
	height: 17px;
	margin: 0 auto 0 381px;
	background: #cdcdcd;
}

.chev
{
	width: 10px;
	height: 10px;
}

/* Mask column */

.mask-col
{
	display: flex;
	flex-direction: column;
	width: 107px;
}

.mask-list
{
	margin-left: 1px;
	border-left: 1px solid #222;
}

.mask
{
	height: 19px;
	background: #ffff00;
	border-bottom: 1px solid #333;
	line-height: 18px;
	text-align: center;
}

.mask.dim
{
	background: #c3c000;
}

.mask.green
{
	background: #00ff00;
	font-size: 11px;
	color: #063;
}

.slots
{
	margin: 694px 1px 0;
	border: 1px solid #222;
}

.slots div
{
	height: 18px;
}

.slots div + div
{
	border-top: 2px solid #000;
}

.mask-foot
{
	display: flex;
	align-items: flex-end;
	margin-top: auto;
	padding: 0 0 3px 6px;
}

.on-round
{
	flex: none;
	width: 67px;
	height: 67px;
	border: 4px solid #000;
	border-radius: 50%;
	background: #00ff00;
	box-shadow: inset 4px 4px #087d08, inset -4px -4px #fff;
	color: #000;
	font: bold 22px "Open Sans", sans-serif;
}

.side
{
	width: 203px;
	display: flex;
	flex-direction: column;
}

.side-panel
{
	flex: 1;
	display: flex;
	align-items: flex-end;
	padding: 0 0 2px 5px;
	border: 1px solid #333;
	border-width: 0 0 1px 2px;
}

.credit
{
	color: #e6e6e6;
	font: 17px/24px "Noto Sans", sans-serif;
	text-decoration: none;
}

.side-icons
{
	display: flex;
	justify-content: flex-end;
	gap: 4px;
	height: 61px;
	padding: 35px 1px 0 0;
}

.side-icons .mini
{
	width: 37px;
	height: 29px;
	flex: none;
}

.mini
{
	display: flex;
	align-items: center;
	justify-content: center;
	border: 2px solid #333;
	border-radius: 6px;
	background: #c0c0c0;
}

.mini.cream
{
	background: #fdf6d8;
}

.f1
{
	font: bold 21px "Liberation Sans", sans-serif;
	fill: #ee4a16;
}

/* Status bar */

.statusbar
{
	display: flex;
	height: 54px;
	border-top: 1px solid #777;
}

.logo
{
	width: 86px;
	background: #fff;
	border: 2px solid #222;
	border-width: 0 1px 0 2px;
}

.sei
{
	font: bold 23px "DejaVu Sans", sans-serif;
	fill: #4d4f53;
}

.orange
{
	fill: #e8752a;
}

.laser
{
	font: bold 9px "DejaVu Sans", sans-serif;
	fill: #e8752a;
}

.field
{
	height: 29px;
	margin-top: 11px;
	border: 1px solid #999;
	border-right-color: #eee;
	border-bottom-color: #eee;
}

.main-field
{
	flex: 1;
	display: flex;
	justify-content: space-between;
	align-items: center;
	margin-left: 14px;
	padding: 0 8px 2px 5px;
	font: 11px/14px "Liberation Sans", sans-serif;
}

.mid-field
{
	width: 143px;
	margin-left: 27px;
}

.small-field
{
	width: 100px;
	margin-left: 28px;
}

.status-icons
{
	display: flex;
	gap: 2px;
	width: 117px;
	padding: 20px 2px 0 0;
	justify-content: flex-end;
}

.status-icons .mini
{
	width: 33px;
	height: 33px;
}

.mini.ice
{
	background: #b8f0f8;
	border-color: #236;
}

.mini.plain
{
	border: 1px solid #888;
}

/* Dialog */

.dialog
{
	position: absolute;
	left: 912px;
	top: 364px;
	width: 600px;
	background: #f0f0f0;
	border: 1px solid #777;
	box-shadow: 0 4px 16px 2px rgba(0, 0, 0, 0.3);
	font-size: 11px;
}

.dialog h1
{
	height: 26px;
	padding-left: 3px;
	background: #fff;
	line-height: 25px;
}

.dialog h2
{
	font-size: 11px;
}

.dialog-body
{
	display: flex;
	flex-direction: column;
	padding: 0 6px 3px 3px;
	border-bottom: 1px solid #fff;
}

.dialog input[type="text"]
{
	height: 20px;
	border: 1px solid #888;
	background: #fff;
	padding: 0 2px;
	min-width: 0;
	font-size: 12px;
}

.dialog input.center
{
	text-align: center;
	width: 38px;
}

.dialog input[type="checkbox"]
{
	appearance: none;
	width: 14px;
	height: 14px;
	border: 1px solid #444;
	background: #fff;
}

/* Tick mark of a checked box */
.dialog input[type="checkbox"]:checked::after
{
	content: "";
	display: block;
	width: 4px;
	height: 8px;
	margin: 0 0 0 4px;
	border: solid #333;
	border-width: 0 1px 1px 0;
	transform: rotate(40deg);
}

.dialog button
{
	background: #e1e1e1;
	border: 1px solid #adadad;
}

.select-wrap
{
	display: flex;
	align-items: center;
}

.select-wrap select
{
	appearance: none;
	flex: 1;
	height: 22px;
	min-width: 0;
	padding-left: 4px;
	background: #e1e1e1;
	border: 1px solid #adadad;
}

.select-wrap svg
{
	width: 10px;
	height: 10px;
	margin: 0 4px 0 -14px;
	pointer-events: none;
}

.sunken
{
	border: 1px solid #fff;
	border-top: 2px solid #777;
	border-left: 2px solid #777;
}

.group
{
	margin-top: 6px;
	border: 1px solid #ddd;
}

.group h2
{
	align-self: center;
	margin-top: -7px;
	padding: 0 4px;
	background: #f0f0f0;
}

.top-row
{
	display: flex;
	height: 160px;
}

.pen-col
{
	display: flex;
	flex-direction: column;
	width: 194px;
	margin-right: 4px;
}

.pen-group
{
	display: flex;
	height: 33px;
	padding-left: 4px;
}

.pen-number, .active-box
{
	display: flex;
	flex-direction: column;
	width: 40px;
	margin-top: -7px;
}

.pen-number label
{
	align-self: flex-start;
	margin-left: 4px;
	padding: 0 3px;
	background: #f0f0f0;
}

.dialog .pen-number input
{
	margin-top: 1px;
	border-color: #2a7fd0;
	text-align: center;
}

.spin
{
	display: flex;
	flex-direction: column;
	gap: 3px;
	padding: 7px 8px 0 5px;
}

.swatch
{
	width: 19px;
	height: 21px;
	margin-top: 9px;
	background: #f00;
	border: 1px solid #933;
}

.beam
{
	margin: 1px 0 0 8px;
}

.active-box
{
	align-items: center;
	margin: 0 0 0 20px;
	gap: 1px;
}

.desc-group
{
	display: flex;
	flex-direction: column;
	height: 33px;
	margin-top: 8px;
	padding: 0 3px 0 8px;
}

.desc-group label
{
	align-self: flex-start;
	margin-top: -7px;
	background: #f0f0f0;
}

.dialog .desc-group input
{
	margin-top: 4px;
}

.freq-box
{
	flex: 1;
	margin-top: 2px;
	padding: 0 4px 0 3px;
}

.check-line
{
	display: flex;
	align-items: center;
	gap: 4px;
	height: 19px;
}

.speed-box
{
	display: grid;
	grid-template-columns: 36px 163px 1fr;
	grid-template-rows: 1fr 22px;
	width: 242px;
	margin-right: 4px;
}

.vscroll
{
	display: flex;
	flex-direction: column;
	align-items: center;
	padding: 7px 0 5px;
}

.vscroll .thumb
{
	width: 13px;
	height: 18px;
	background: #cdcdcd;
}

.vscroll.low .thumb
{
	margin: auto 0 5px;
}

.vscroll.mid .thumb
{
	margin: auto 0 29px;
}

.speed-mid
{
	display: flex;
	flex-direction: column;
	justify-content: flex-end;
	align-items: center;
	gap: 3px;
}

.speed-foot
{
	grid-column: 1 / 4;
	display: flex;
	align-items: center;
	gap: 4px;
	padding: 0 3px 3px 1px;
}

.push
{
	margin-left: auto;
}

.actions
{
	flex: 1;
	display: flex;
	flex-direction: column;
	height: 120px;
	margin-right: -6px;
	padding: 4px 6px 0 1px;
	border-bottom: 2px solid #ccc;
}

.wide
{
	width: 98px;
	height: 22px;
	flex: none;
	margin: 0 0 5px 4px;
}

.to-right
{
	margin-left: 42px;
}

.library
{
	display: flex;
	flex-direction: column;
	height: 29px;
	margin-top: 3px;
}

.library div
{
	display: flex;
	justify-content: space-between;
	padding: 0 3px;
}

.library button
{
	width: 64px;
	height: 19px;
}

.power-box
{
	display: grid;
	grid-template-columns: 94px 28px 60px 50px 50px 50px 63px 1fr;
	grid-template-rows: 111px 22px 22px 22px 22px;
	width: 440px;
	height: 206px;
	margin-top: 7px;
	padding-left: 3px;
}

.dialog text
{
	font: 11px Roboto, sans-serif;
	fill: #222;
}

.vert-group
{
	grid-row: 1 / 3;
	display: flex;
	flex-direction: column;
	align-items: center;
	height: 130px;
	margin-top: 2px;
	border: 1px solid #ddd;
}

.vert-group h2
{
	white-space: nowrap;
	margin-top: 2px;
}

.vert-mid
{
	display: flex;
	align-self: stretch;
	height: 91px;
}

.vert-labels
{
	display: flex;
	flex-direction: column;
	justify-content: space-between;
	align-items: center;
	width: 47px;
	padding: 1px 0 3px;
}

.vscroll.slim
{
	width: 17px;
	padding: 4px 0;
}

.vscroll.slim .thumb
{
	width: 9px;
	margin: auto 0 5px;
}

.vert-inputs
{
	display: flex;
	gap: 4px;
}

.power-chart
{
	grid-column: 2 / 9;
	overflow: visible;
}

.cell
{
	width: 40px;
	margin: 2px 0 0;
	text-align: right;
}

.cell.aus
{
	grid-column: 8;
	width: 34px;
}

.head
{
	height: 18px;
	border: 1px solid #ddd;
	line-height: 17px;
	text-align: center;
}

.head.c1
{
	grid-column: 3;
}

.row-name
{
	grid-column: 1 / 3;
	padding-right: 6px;
	line-height: 23px;
	text-align: right;
}

.gas-box
{
	display: flex;
	justify-content: space-between;
	height: 122px;
	margin-top: 5px;
	padding-right: 3px;
}

.gas-left
{
	display: grid;
	grid-template-columns: 61px 64px 60px 50px 50px 50px;
	grid-template-rows: 21px 1fr;
}

.gas-left .cell
{
	margin-top: 1px;
}

.gas-title, .bar-name
{
	line-height: 18px;
}

.bar-name
{
	padding-right: 6px;
	text-align: right;
}

.gas-chart
{
	grid-column: 1 / 7;
	overflow: visible;
}

.gas-right
{
	width: 185px;
	padding-top: 10px;
}

.plain-group
{
	display: flex;
	align-items: flex-start;
	justify-content: space-between;
	height: 39px;
	padding: 1px 3px;
	border: 1px solid #ddd;
	line-height: 20px;
}

.gas-group
{
	display: flex;
	flex-direction: column;
	height: 61px;
	margin-top: 7px;
	padding: 0 4px;
}

.gas-group h2
{
	margin-bottom: 2px;
}

.gas-group button
{
	height: 21px;
	margin: 4px 4px 0;
}

/* Control window */

.control
{
	position: absolute;
	right: 4px;
	top: 1px;
	width: 202px;
	height: 441px;
	display: flex;
	flex-direction: column;
	background: #c0c0c0;
	border: 2px solid #d08a4a;
	border-width: 0 2px 2px 1px;
	box-shadow: 0 2px 12px 2px rgba(0, 0, 0, 0.35);
}

.control-title
{
	display: flex;
	justify-content: space-between;
	align-items: center;
	height: 25px;
	padding: 0 7px 0 3px;
	background: #fff;
	color: #888;
}

.control-title button
{
	border: 0;
	background: none;
}

.coords
{
	display: grid;
	grid-template-columns: 73px 73px 1fr;
	background: #f0f0f0;
	text-align: center;
	font: 13px/15px "Liberation Sans", sans-serif;
}

.coords output
{
	height: 19px;
	padding: 1px 5px 0 0;
	background: #fff;
	border: 1px solid #888;
	text-align: right;
	font-size: 14px;
}

.coords output:last-child
{
	padding-right: 8px;
}

.pen-line
{
	display: flex;
	height: 25px;
}

.flat
{
	flex: none;
	width: 78px;
	background: #f0f0f0;
}

.flat select
{
	width: 78px;
	background: none;
	border: 0;
	font-size: 13px;
}

.height-box
{
	flex: 1;
	min-width: 0;
	display: flex;
	border: 4px solid #0000d8;
	border-width: 4px 2px 4px 4px;
}

.height-box input
{
	width: 46px;
	border: 0;
	background: #fff;
	text-align: center;
	font: 14px "Liberation Sans", sans-serif;
}

.key
{
	display: flex;
	align-items: center;
	justify-content: center;
	flex: none;
	width: 38px;
	overflow: hidden;
	background: #c0c0c0;
	border: 1px solid #333;
	box-shadow: inset 1px 1px #eee, inset -1px -1px #777;
}

.pad
{
	display: grid;
	grid-template-columns: 41px 37px 37px 41px 37px;
	grid-auto-rows: 37px;
	row-gap: 1px;
	padding: 1px 0 0 3px;
}

.pad .key
{
	width: 37px;
}

.green
{
	background: #008000;
}

.yellow
{
	background: #ffff00;
}

.navy
{
	background: #000090;
	box-shadow: inset 1px 1px #1b8fa8, inset -1px -1px #1b8fa8;
}

.arm
{
	fill: none;
	stroke: #000;
	stroke-width: 5px;
	stroke-linecap: round;
}

.axis
{
	font: bold 9px "DejaVu Sans", sans-serif;
	fill: #fff;
}

.zero
{
	font: bold 11px "Liberation Sans", sans-serif;
	fill: #0000b0;
}

.zero.small
{
	font-size: 9px;
}

.xy
{
	font: bold 12px "Liberation Sans", sans-serif;
	fill: #000090;
}

.key-row
{
	display: flex;
	gap: 1px;
	height: 30px;
	margin: 4px 0 0 3px;
}

.apart
{
	margin-left: 2px;
}

.key-row.tall
{
	height: 37px;
}

.state-row
{
	display: flex;
	align-items: center;
	height: 39px;
	margin: 4px 0 0 3px;
}

.on-square
{
	width: 39px;
	height: 39px;
	margin: 0 auto 0 46px;
	border: 2px solid #000;
	border-radius: 9px;
	background: #1fe01f;
	box-shadow: inset 0 0 0 2px #0a7a0a;
	color: #021;
	font: bold 19px Roboto, sans-serif;
}

.wide-key
{
	width: 63px;
	height: 38px;
}

.job-box
{
	display: flex;
	width: 137px;
	height: 48px;
	border: 3px solid #f08030;
	border-left-width: 0;
}

.tall-key
{
	width: 31px;
	height: 42px;
}

.job-mid
{
	flex: 1;
	min-width: 0;
}

.job-count
{
	display: flex;
	justify-content: space-between;
	height: 21px;
	background: #eee;
	line-height: 20px;
	text-align: center;
}

.job-count input
{
	width: 45px;
	border: 0;
	background: #fff;
	text-align: center;
	font: 13px "Liberation Sans", sans-serif;
}

.job-keys
{
	display: flex;
	height: 21px;
}

.job-keys .key
{
	width: 44px;
}

.job-keys .key + .key
{
	flex: 1;
}

.start-row
{
	display: flex;
	align-items: center;
	justify-content: space-between;
	padding: 0 2px 0 13px;
}

.start
{
	display: flex;
	justify-content: center;
	width: 62px;
	height: 38px;
	padding-top: 3px;
	background: #ff7f40;
	border: 2px solid #6b2a08;
	color: #000;
}

.timer
{
	width: 111px;
	height: 30px;
	padding-right: 4px;
	border: 2px solid #444;
	line-height: 25px;
	text-align: right;
	font-size: 22px;
	color: #00007d;
}

.timer small
{
	font-size: 17px;
}
```
